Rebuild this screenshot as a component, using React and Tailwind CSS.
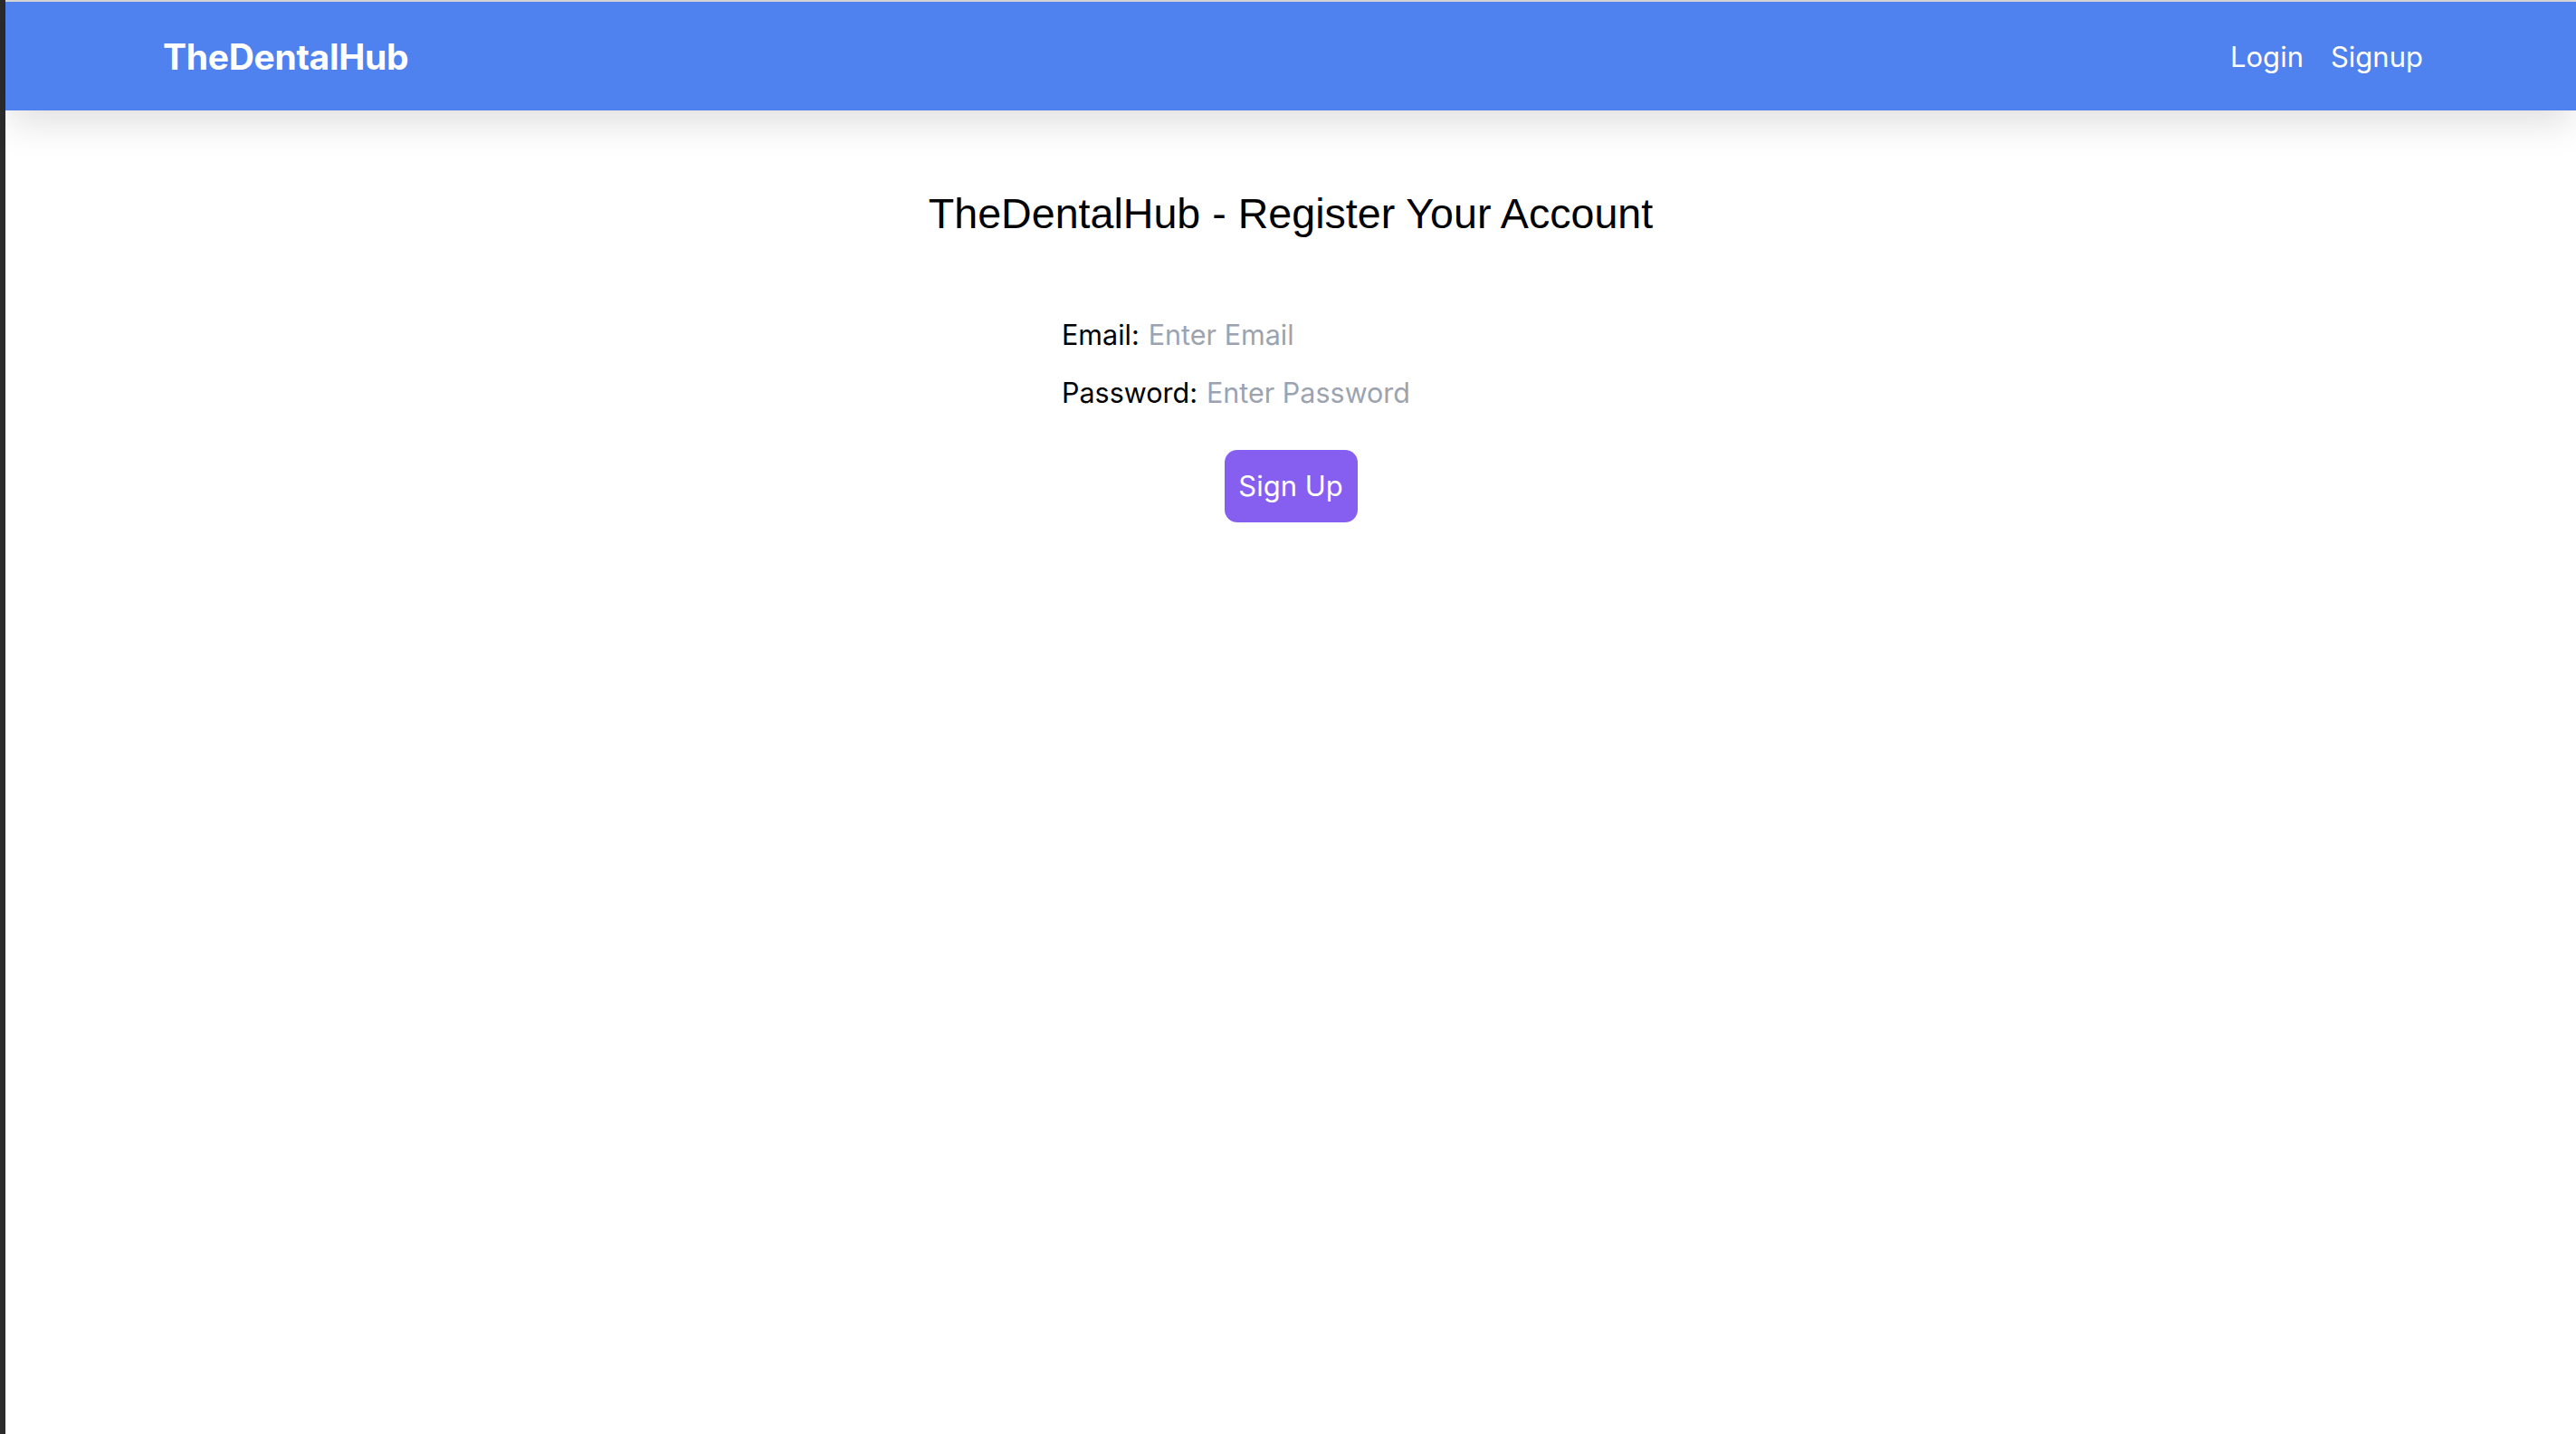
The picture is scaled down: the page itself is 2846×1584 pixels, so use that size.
import React, { useState } from 'react'

export default function App() {
  const [email, setEmail] = useState('')
  const [password, setPassword] = useState('')

  return (
    <div className="flex min-h-[1584px] w-full bg-white font-['Inter','Noto_Sans',sans-serif]">
      {/* dark window edge on the left */}
      <div className="w-[6px] shrink-0 bg-[#2b2b2b]" />

      <div className="flex flex-1 flex-col">
        <div className="h-[2px] bg-[#d6d6d6]" />

        {/* Navbar */}
        <nav className="relative z-10 flex h-[120px] items-center justify-between bg-[#4f82ee] pl-[174px] pr-[169px] pt-[3px] shadow-[0_18px_40px_-4px_rgba(0,0,0,0.13)]">
          <a href="#" className="text-[39px] font-bold tracking-[-0.3px] text-white">TheDentalHub</a>
          <div className="flex items-center gap-[30px] text-[31px] text-white">
            <a href="#">Login</a>
            <a href="#">Signup</a>
          </div>
        </nav>

        {/* Register form */}
        <main className="flex flex-col items-center pt-[86px]">
          <h1 className="font-['Liberation_Sans',Arial,sans-serif] text-[46.6px] leading-[56px] text-black">
            TheDentalHub - Register Your Account
          </h1>

          <form className="mt-[74px] flex w-[506px] flex-col" onSubmit={e => e.preventDefault()}>
            <label className="flex h-[64px] items-center gap-[10px] text-[30.5px] text-black">
              Email:
              <input type="email" value={email} onChange={e => setEmail(e.target.value)} placeholder="Enter Email"
                className="w-[360px] bg-transparent outline-none placeholder:text-[#9ca3af]" />
            </label>
            <label className="flex h-[64px] items-center gap-[10px] text-[30.5px] text-black">
              Password:
              <input type="password" value={password} onChange={e => setPassword(e.target.value)} placeholder="Enter Password"
                className="w-[340px] bg-transparent outline-none placeholder:text-[#9ca3af]" />
            </label>
            <button type="submit"
              className="mx-auto mt-[31px] h-[80px] w-[147px] cursor-pointer rounded-[14px] bg-[#865ff0] text-[31px] text-white">
              Sign Up
            </button>
          </form>
        </main>
      </div>
    </div>
  )
}
